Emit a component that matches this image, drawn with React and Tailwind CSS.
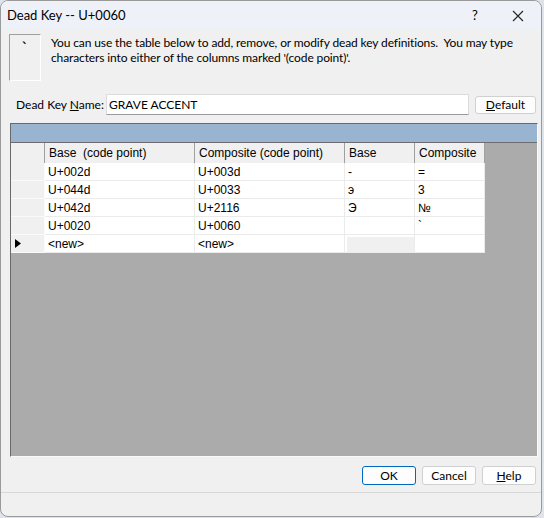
import React from "react";

const ui = { fontFamily: 'Lato, "Noto Sans", sans-serif' };
const grid = { fontFamily: '"Liberation Sans", Arial, sans-serif' };

const rows = [
  ["U+002d", "U+003d", "-", "="],
  ["U+044d", "U+0033", "э", "3"],
  ["U+042d", "U+2116", "Э", "№"],
  ["U+0020", "U+0060", "", "`"],
];

function Cell({ w, children, cls = "" }) {
  return (
    <div
      className={`h-full flex items-center pl-[3px] border-r border-b border-[#ebebeb] bg-white ${cls}`}
      style={{ width: w }}
    >
      {children}
    </div>
  );
}

export default function App() {
  const widths = [150, 150, 70, 70];
  return (
    <div className="w-[544px] h-[518px] bg-[#dfe3ea]">
      <div
        className="w-[542px] h-[517px] border border-[#9a9a9a] rounded-[8px] overflow-hidden flex flex-col bg-[#f0f0f0] text-[12px] text-black whitespace-nowrap"
        style={ui}
      >
        {/* Title bar */}
        <div className="h-[29px] bg-[#eef2f8] flex items-center shrink-0">
          <span className="pl-[6px] pt-[1px] text-[13px]">Dead Key -- U+0060</span>
          <div className="flex-1" />
          <span className="w-[20px] text-center text-[13px] mr-[27px]">?</span>
          <svg width="12" height="12" viewBox="0 0 12 12" className="mr-[17px]">
            <path d="M1 1 L11 11 M11 1 L1 11" stroke="#222" strokeWidth="1.1" />
          </svg>
        </div>

        {/* Info */}
        <div className="flex pt-[4px] pl-[8px]">
          <div className="w-[32px] h-[47px] border-l border-t border-[#a0a0a0] border-r border-b border-r-white border-b-white flex justify-center pt-[6px]">
            <span className="font-bold text-[13px] leading-none" style={{ fontFamily: '"DejaVu Sans", sans-serif' }}>`</span>
          </div>
          <div className="ml-[10px] leading-[15px] pt-[1px] tracking-[-0.12px]">
            You can use the table below to add, remove, or modify dead key definitions.&nbsp; You may type
            <br />
            characters into either of the columns marked '(code point)'.
          </div>
        </div>

        {/* Name row */}
        <div className="flex items-center mt-[13px] h-[21px]">
          <span className="pl-[15px] w-[105px]">
            Dead Key <span className="underline">N</span>ame:
          </span>
          <div className="w-[363px] h-[21px] bg-white border border-[#dcdcdc] border-b-[#9a9a9a] flex items-center pl-[2px]">
            GRAVE ACCENT
          </div>
          <div className="ml-[6px] w-[61px] h-[18px] bg-[#fdfdfd] border border-[#d0d0d0] rounded-[3px] flex items-center justify-center">
            <span><span className="underline">D</span>efault</span>
          </div>
        </div>

        {/* Grid */}
        <div
          className="mt-[8px] ml-[9px] w-[528px] h-[334px] border-l border-t border-[#6a6a6a] border-r border-b border-r-[#fafafa] border-b-[#fafafa] bg-[#ababab] flex flex-col text-[12px]"
          style={grid}
        >
          <div className="h-[19px] bg-[#99b4d1] border-b border-[#6d6d6d] shrink-0" />
          {/* header */}
          <div className="flex h-[20px] shrink-0">
            <div className="w-[34px] h-full bg-[#f0f0f0] border-r border-[#a0a0a0]" />
            {["Base  (code point)", "Composite (code point)", "Base", "Composite"].map((h, i) => (
              <div
                key={i}
                className="h-full bg-[#f0f0f0] flex items-center pl-[4px] border-r border-[#a0a0a0] whitespace-pre"
                style={{ width: widths[i] }}
              >
                {h}
              </div>
            ))}
          </div>
          {rows.map((r, ri) => (
            <div key={ri} className="flex h-[18px] shrink-0">
              <div className="w-[34px] h-full bg-[#f0f0f0] border-r border-b border-[#fafafa]" />
              {r.map((v, ci) => (
                <Cell key={ci} w={widths[ci]}>{v}</Cell>
              ))}
            </div>
          ))}
          <div className="flex h-[18px] shrink-0">
            <div className="w-[34px] h-full bg-[#f0f0f0] border-r border-b border-[#fafafa] flex items-center pl-[4px]">
              <svg width="6" height="9" viewBox="0 0 6 9">
                <path d="M0 0 L6 4.5 L0 9 Z" fill="#000" />
              </svg>
            </div>
            <Cell w={150}>&lt;new&gt;</Cell>
            <Cell w={150}>&lt;new&gt;</Cell>
            <div className="h-full bg-white border-r border-b border-[#ebebeb] pt-[2px] pl-[2px]" style={{ width: 70 }}>
              <div className="w-full h-full bg-[#f0f0f0]" />
            </div>
            <Cell w={70}></Cell>
          </div>
        </div>

        {/* Buttons */}
        <div className="flex justify-end gap-[6px] mt-[9px] mr-[5px]">
          <div className="w-[54px] h-[19px] border border-[#0067c0] rounded-[3px] bg-[#fdfdfd] flex items-center justify-center">OK</div>
          <div className="w-[54px] h-[19px] border border-[#d0d0d0] rounded-[3px] bg-[#fdfdfd] flex items-center justify-center">Cancel</div>
          <div className="w-[54px] h-[19px] border border-[#d0d0d0] rounded-[3px] bg-[#fdfdfd] flex items-center justify-center">
            <span><span className="underline">H</span>elp</span>
          </div>
        </div>
        <div className="mt-[7px] border-t border-[#d7d7d7] flex-1" />
      </div>
    </div>
  );
}
